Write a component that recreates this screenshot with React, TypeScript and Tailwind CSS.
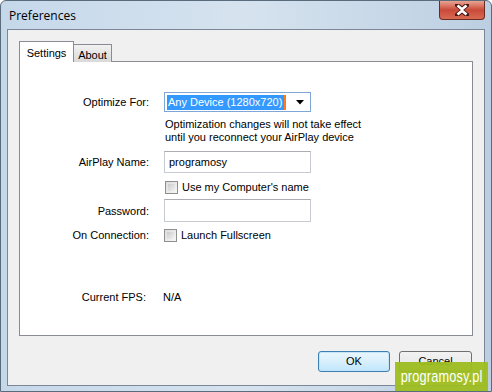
import React from "react";

const ui = { fontFamily: '"Liberation Sans", Arial, sans-serif' };

const Checkbox = ({ label }: { label: string }) => (
  <label className="flex items-center h-[14px] gap-[4px] text-[11px] leading-[14px] text-black">
    <span className="w-[13px] h-[13px] border border-[#8f8f8f] bg-gradient-to-br from-[#dcdcdc] to-[#f7f7f7] p-[2px]">
      <span className="block w-full h-full bg-gradient-to-br from-[#cbcbcb] to-[#f2f2f2]" />
    </span>
    {label}
  </label>
);

const Row = ({ label, children, className = "" }: { label: string; children: React.ReactNode; className?: string }) => (
  <div className={"flex items-center " + className}>
    <div className="w-[130px] pr-[1px] text-right text-[11px] leading-[14px] text-black">{label}</div>
    <div className="ml-[14px]">{children}</div>
  </div>
);

const Preferences = () => {
  return (
    <div
      className="relative w-[492px] h-[392px] overflow-hidden flex flex-col bg-gradient-to-r from-[#c5d8ea] via-[#d6e3ef] to-[#bccfe2] border border-[#5a6b7c] rounded-t-[6px]"
      style={ui}
    >
      {/* title bar */}
      <div className="h-[28px] flex items-start justify-between pl-[8px]">
        <div className="pt-[6px] text-[12px] text-black" style={{ fontFamily: '"Open Sans", "Liberation Sans", sans-serif' }}>
          Preferences
        </div>
        <div className="mr-[6px] w-[46px] h-[19px] rounded-b-[4px] border border-t-0 border-[#6d2a22] bg-gradient-to-b from-[#e8a493] via-[#c9493a] to-[#d86a52] flex items-center justify-center">
          <svg width="14" height="12" viewBox="0 0 14 12">
            <path d="M2 1 L7 5 L12 1 M2 11 L7 7 L12 11" stroke="#4a1a14" strokeWidth="4.5" fill="none" strokeLinecap="square" />
            <path d="M2.5 1.5 L7 5.2 L11.5 1.5 M2.5 10.5 L7 6.8 L11.5 10.5" stroke="#ffffff" strokeWidth="2.6" fill="none" />
          </svg>
        </div>
      </div>

      {/* client area */}
      <div className="mx-[6px] h-[357px] border border-[#7b8797] bg-[#f0f0f0] flex flex-col px-[11px] pt-[11px]">
        {/* tabs */}
        <div className="flex items-end h-[21px] relative z-10">
          <div className="w-[55px] h-[21px] bg-white border border-b-0 border-[#898c95] text-[11px] text-black flex items-start justify-center pt-[3px]">
            Settings
          </div>
          <div className="w-[38px] h-[18px] bg-gradient-to-b from-[#f2f2f2] to-[#d9d9d9] border border-l-0 border-b-0 border-[#898c95] text-[11px] text-black flex items-start justify-center pt-[2px]">
            About
          </div>
        </div>

        {/* panel */}
        <div className="-mt-[1px] h-[275px] bg-white border border-[#898c95] flex flex-col pt-[30px]">
          <Row label="Optimize For:">
            <div className="w-[147px] h-[20px] border border-[#7ea6d8] bg-white flex items-center justify-between pl-[2px] pr-[6px]">
              <span className="bg-[#3399ff] text-white text-[11px] leading-[15px] pl-[1px] pr-[2px] border-r-2 border-[#ff7a1a]">Any Device (1280x720)</span>
              <svg width="8" height="5" viewBox="0 0 8 5"><path d="M0 0 H8 L4 4.5 Z" fill="#000" /></svg>
            </div>
          </Row>
          <div className="ml-[145px] mt-[6px] text-[11px] leading-[13px] text-black">
            <div>Optimization changes will not take effect</div>
            <div>until you reconnect your AirPlay device</div>
          </div>
          <Row label="AirPlay Name:" className="mt-[7px]">
            <div className="w-[147px] h-[22px] border border-[#c7cbd1] border-t-[#abadb3] bg-white flex items-center pl-[4px] text-[11px] text-black">
              programosy
            </div>
          </Row>
          <div className="ml-[145px] mt-[7px]">
            <Checkbox label="Use my Computer's name" />
          </div>
          <Row label="Password:" className="mt-[5px]">
            <div className="w-[147px] h-[23px] border border-[#c7cbd1] border-t-[#abadb3] bg-white" />
          </Row>
          <Row label="On Connection:" className="mt-[6px]">
            <Checkbox label="Launch Fullscreen" />
          </Row>
          <div className="flex items-center mt-[48px] h-[14px]">
            <div className="w-[126px] text-right text-[11px] leading-[14px] text-black">Current FPS:</div>
            <div className="ml-[17px] text-[11px] leading-[14px] text-black">N/A</div>
          </div>
        </div>

        {/* buttons */}
        <div className="flex justify-end gap-[9px] mt-[15px] pr-[1px]">
          <button className="w-[72px] h-[21px] rounded-[3px] border border-[#3c7fb1] bg-gradient-to-b from-[#eaf6fd] via-[#d9f0fc] to-[#bee6fd] text-[11px] text-black shadow-[inset_0_0_0_1px_#c5e4f7]">
            OK
          </button>
          <button className="w-[73px] h-[21px] rounded-[3px] border border-[#707070] bg-gradient-to-b from-[#f2f2f2] via-[#ebebeb] to-[#d6d6d6] text-[11px] text-black">
            Cancel
          </button>
        </div>
      </div>

      {/* watermark */}
      <div className="absolute right-[3px] bottom-0 w-[93px] h-[29px] bg-[#9dbd1f]/95 text-white flex items-center justify-center overflow-hidden">
        <span className="text-[17px] tracking-[0.2px] scale-x-75 whitespace-nowrap">programosy.pl</span>
      </div>
    </div>
  );
};

export default function App() {
  return <Preferences />;
}
